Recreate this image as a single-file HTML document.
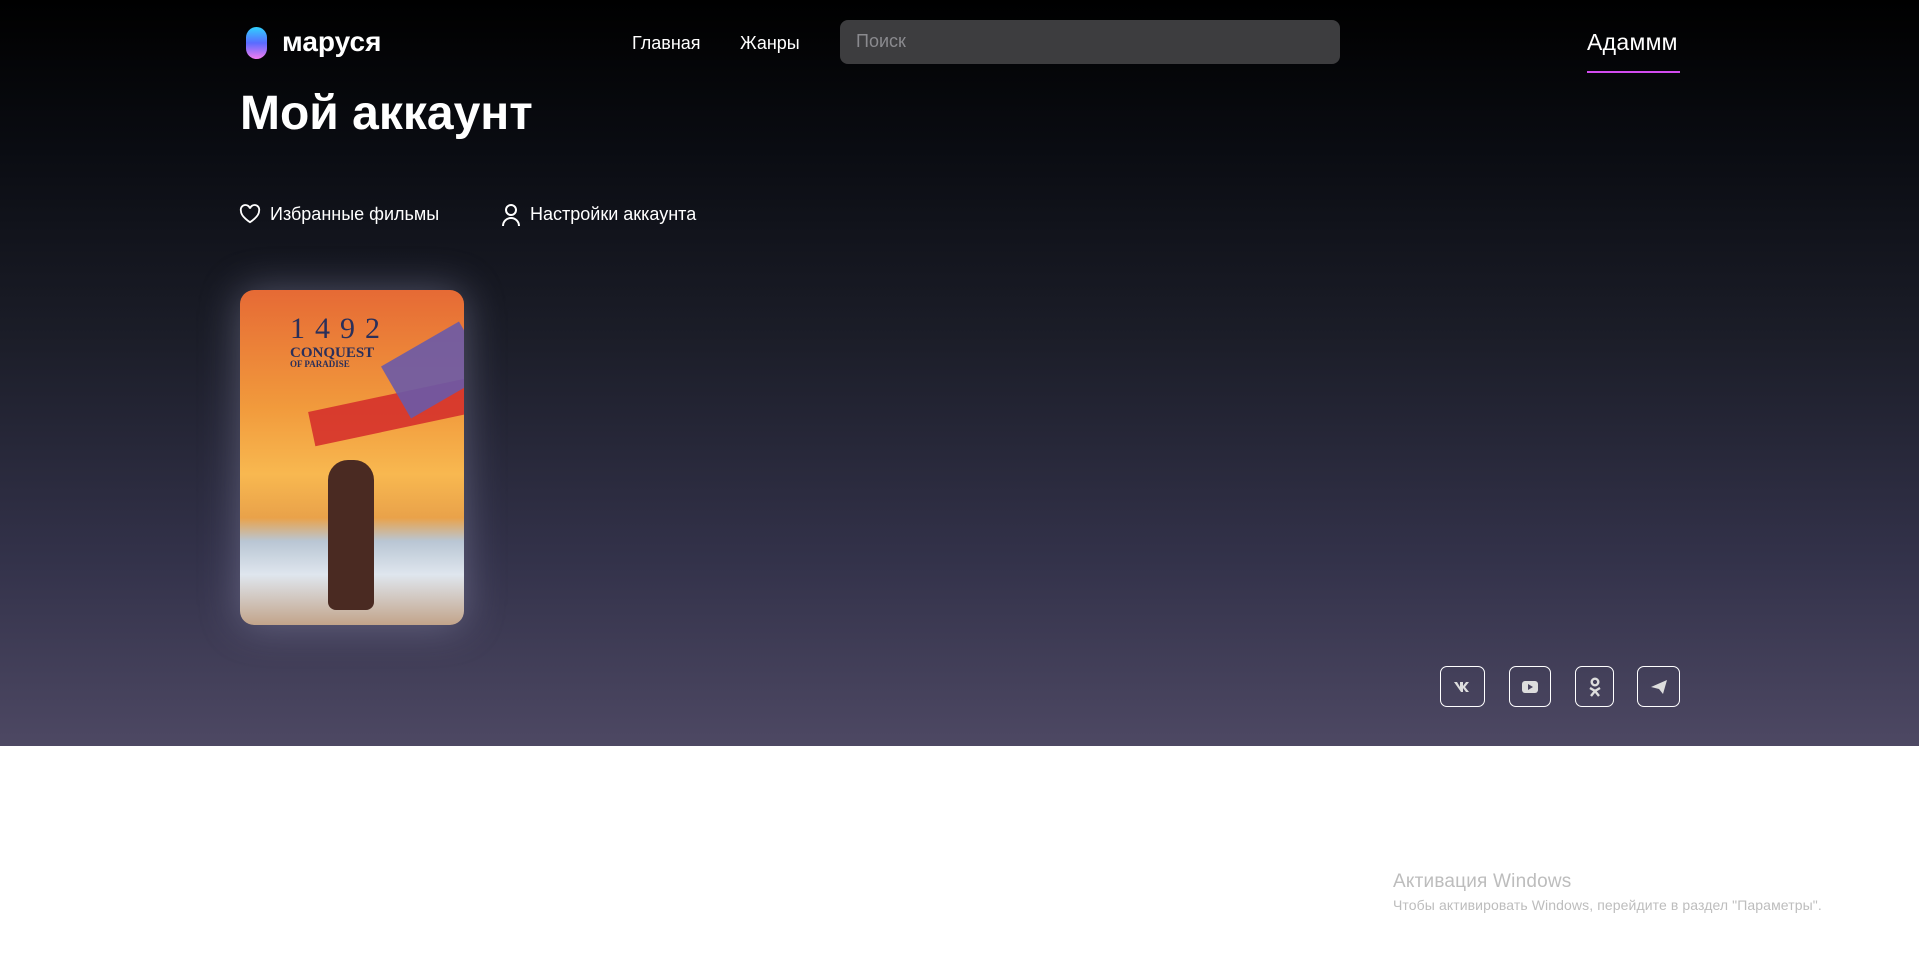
<!DOCTYPE html><html><head><meta charset="utf-8"><style>
*{margin:0;padding:0;box-sizing:border-box}
body{width:1919px;height:962px;background:#fff;font-family:"Liberation Sans",Arial,sans-serif;position:relative;overflow:hidden}
.dark{position:absolute;left:0;top:0;width:1919px;height:746px;background:linear-gradient(180deg,#000 0%,#0a0c12 20%,#1b1d28 45%,#33324a 75%,#4d4863 100%)}
.a{position:absolute;color:#fff;white-space:nowrap}
.search{position:absolute;left:840px;top:20px;width:500px;height:44px;background:#3d3d3f;border-radius:8px;color:#8a8a8e;font-size:18px;padding:11px 16px}
.soc{position:absolute;top:666px;height:41px;border:1.5px solid #fff;border-radius:7px;display:flex;align-items:center;justify-content:center}
.poster{position:absolute;left:240px;top:290px;width:224px;height:335px;border-radius:14px;overflow:hidden;box-shadow:0 0 40px rgba(190,190,230,.35);background:linear-gradient(180deg,#e66a35 0%,#f19a3c 35%,#f8b850 55%,#e9a24a 68%,#b9c6d4 75%,#dfe6ee 85%,#c2a48a 100%)}
</style></head><body>
<div class="dark"></div>
<div style="position:absolute;left:246px;top:27px;width:21px;height:32px;border-radius:11px;background:linear-gradient(180deg,#2fd2ff,#5a6bff 50%,#f27bf0)"></div>
<div class="a" style="left:282px;top:26px;font-size:28px;font-weight:bold">маруся</div>
<div class="a" style="left:632px;top:33px;font-size:18px">Главная</div>
<div class="a" style="left:740px;top:33px;font-size:18px">Жанры</div>
<div class="search">Поиск</div>
<div class="a" style="left:1587px;top:29px;font-size:23px;letter-spacing:0.3px">Адаммм</div>
<div style="position:absolute;left:1587px;top:71px;width:93px;height:1.5px;background:#d24bf0"></div>
<div class="a" style="left:240px;top:86px;font-size:48px;font-weight:bold">Мой аккаунт</div>
<svg style="position:absolute;left:239px;top:204px" width="22" height="20" viewBox="0 0 24 22"><path d="M12 20S2 14 2 7.5A5 5 0 0 1 12 5a5 5 0 0 1 10 2.5C22 14 12 20 12 20z" fill="none" stroke="#fff" stroke-width="2"/></svg>
<div class="a" style="left:270px;top:204px;font-size:18px">Избранные фильмы</div>
<svg style="position:absolute;left:500px;top:203px" width="22" height="24" viewBox="0 0 22 24"><circle cx="11" cy="7" r="5" fill="none" stroke="#fff" stroke-width="2"/><path d="M3 23a8 8 0 0 1 16 0" fill="none" stroke="#fff" stroke-width="2"/></svg>
<div class="a" style="left:530px;top:204px;font-size:18px">Настройки аккаунта</div>
<div class="poster">
<div style="position:absolute;left:50px;top:22px;font-family:'Liberation Serif',serif;color:#2a2f5a;font-size:30px;letter-spacing:10px">1492</div>
<div style="position:absolute;left:50px;top:55px;font-family:'Liberation Serif',serif;color:#2a2f5a;font-size:15px;font-weight:bold">CONQUEST</div>
<div style="position:absolute;left:50px;top:69px;font-family:'Liberation Serif',serif;color:#2a2f5a;font-size:9px;font-weight:bold">OF PARADISE</div>
<div style="position:absolute;left:70px;top:105px;width:160px;height:35px;background:#d42a2a;transform:rotate(-12deg);opacity:.85"></div>
<div style="position:absolute;left:150px;top:50px;width:90px;height:60px;background:#6a5aa8;transform:rotate(-30deg);opacity:.9"></div>
<div style="position:absolute;left:88px;top:170px;width:46px;height:150px;background:#4a2a22;border-radius:20px 20px 8px 8px"></div>
</div>
<div class="soc" style="left:1440px;width:45px"><svg width="20" height="12" viewBox="0 0 20 12"><path d="M1 1h3l3 5V1h3v4l3-4h3l-4 5 4 5h-3l-3-4v4H8L1 1z" fill="#ddd"/></svg></div>
<div class="soc" style="left:1509px;width:42px"><svg width="16" height="12"><rect width="16" height="12" rx="3" fill="#ddd"/><path d="M6 3l5 3-5 3z" fill="#4a4560"/></svg></div>
<div class="soc" style="left:1575px;width:39px"><svg width="12" height="20" viewBox="0 0 12 20"><circle cx="6" cy="5" r="3.3" fill="none" stroke="#ddd" stroke-width="2.4"/><path d="M1 11l5 3 5-3M2 19l4-5 4 5" fill="none" stroke="#ddd" stroke-width="2.4"/></svg></div>
<div class="soc" style="left:1637px;width:43px"><svg width="18" height="16" viewBox="0 0 18 16"><path d="M1 8L17 1 13 15 9 10z" fill="#ddd"/></svg></div>
<div style="position:absolute;left:1393px;top:871px;color:#bdbdbd;font-size:19px;letter-spacing:0.2px">Активация Windows</div>
<div style="position:absolute;left:1393px;top:897px;color:#bdbdbd;font-size:14px;letter-spacing:0.1px">Чтобы активировать Windows, перейдите в раздел "Параметры".</div>
</body></html>
